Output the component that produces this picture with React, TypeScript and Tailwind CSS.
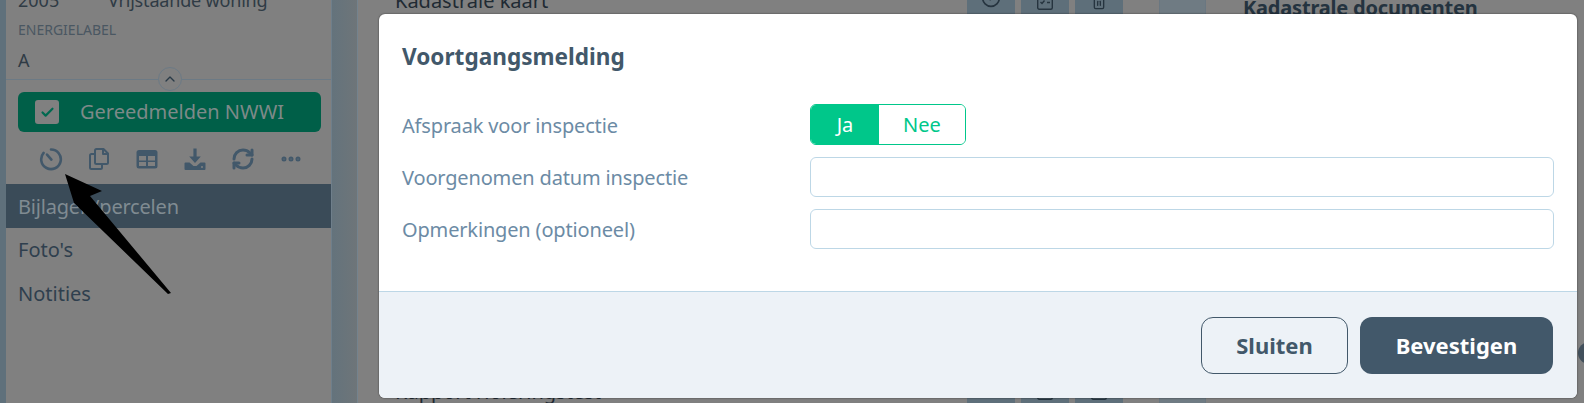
import { Check, ChevronUp, CircleCheck, Ellipsis, RefreshCw, Trash2 } from "lucide-react";

const font = { fontFamily: '"Noto Sans", sans-serif' };

function ActionButton({ children }: { children?: React.ReactNode }) {
  return <div className="flex h-12 w-12 items-center justify-center rounded bg-[#5e6f7a] text-[#26343f]">{children}</div>;
}

function TaskIcon() {
  return (
    <svg width="16" height="16" viewBox="0 0 16 16" fill="none" stroke="currentColor" strokeWidth="1.4">
      <rect x="0.7" y="0.7" width="14.600" height="14.600" rx="1.500" />
      <path d="M3.500 8l1.500 1.500L7.500 6.500M10 8.500h3" />
    </svg>
  );
}

function BoxIcon() {
  return (
    <svg width="16" height="16" viewBox="0 0 16 16" fill="none" stroke="currentColor" strokeWidth="1.4">
      <rect x="0.7" y="0.7" width="14.600" height="14.600" rx="1.500" />
    </svg>
  );
}

function DocRow({ title, className, top }: { title: string; className: string; top?: boolean }) {
  return (
    <div className={`flex h-12 items-center ${className}`}>
      <span className={`w-[609px] pl-[37px] text-[20px] text-[#1f2a33] ${top ? "-mt-[3px]" : ""}`}>{title}</span>
      <div className="flex gap-[6px]">
        <ActionButton>{top && <CircleCheck size={20} className="mb-[8px]" />}</ActionButton>
        <ActionButton>{top ? <TaskIcon /> : <BoxIcon />}</ActionButton>
        <ActionButton>{top ? <Trash2 size={16} /> : <BoxIcon />}</ActionButton>
      </div>
    </div>
  );
}

function ToolIcons() {
  return (
    <div className="mt-[15px] flex h-[24px] items-center gap-[24px] pl-[33px] text-[#42586a]">
      <svg width="24" height="24" viewBox="0 0 24 24" fill="none" stroke="currentColor" strokeWidth="2.6" strokeLinecap="round">
        <path d="M12 2.500a9.800 9.800 0 1 1-7.400 3.400" />
        <path d="M12.400 12.600 8 7.600" />
      </svg>
      <svg width="24" height="24" viewBox="0 0 24 24" fill="none" stroke="currentColor" strokeWidth="2" strokeLinejoin="round">
        <path d="M9.500 2h7l4.500 4.500V15.500a1.500 1.500 0 0 1-1.500 1.500h-10A1.500 1.500 0 0 1 8 15.500v-12A1.500 1.500 0 0 1 9.500 2z" />
        <path d="M16 2v5h5" />
        <path d="M8 7H4.500A1.500 1.500 0 0 0 3 8.500v12A1.500 1.500 0 0 0 4.500 22h9a1.500 1.500 0 0 0 1.500-1.500V17" />
      </svg>
      <svg width="24" height="24" viewBox="0 0 24 24">
        <rect x="1.500" y="3" width="21" height="18.500" rx="2.500" fill="currentColor" />
        <rect x="4" y="9" width="7" height="4.500" fill="#808080" />
        <rect x="13" y="9" width="7" height="4.500" fill="#808080" />
        <rect x="4" y="15" width="7" height="4" fill="#808080" />
        <rect x="13" y="15" width="7" height="4" fill="#808080" />
      </svg>
      <svg width="24" height="24" viewBox="0 0 24 24" fill="currentColor">
        <path d="M10.400 1.500h3.200v8h4.200L12 16 6.200 9.500h4.200z" />
        <path d="M1.500 16.500a1 1 0 0 1 1-1h4l4 3.500h3l4-3.500h4a1 1 0 0 1 1 1V22a1 1 0 0 1-1 1h-19a1 1 0 0 1-1-1z" />
        <circle cx="19" cy="20" r="1" fill="#808080" />
      </svg>
      <RefreshCw size={24} strokeWidth={3} />
      <Ellipsis size={24} strokeWidth={3} />
    </div>
  );
}

function Sidebar() {
  return (
    <aside className="w-[326px] shrink-0 border-r border-[#6f7f8b] bg-[#808080] text-[#2f3b45]">
      <div className="-mt-[10px] flex h-[20px] items-center px-[12px] text-[18px] leading-none">
        <span className="w-[90px]">2005</span>
        <span className="tracking-[-0.01em]">Vrijstaande woning</span>
      </div>
      <div className="mt-[10px] h-[20px] px-[12px] text-[14px] leading-[20px] text-[#4a5762]">ENERGIELABEL</div>
      <div className="mt-[10px] h-[20px] px-[12px] text-[18px] leading-[20px]">A</div>
      <div className="relative mt-[9px] border-b border-[#6c7a85]">
        <div className="absolute left-[152px] top-[-12px] flex h-[24px] w-[24px] items-center justify-center rounded-full border border-[#6c7a85] bg-[#808080] text-[#2a3a47]">
          <ChevronUp size={16} />
        </div>
      </div>
      <div className="mx-[12px] mt-[12px] flex h-[40px] w-[303px] items-center rounded-[6px] bg-[#005f48] pl-[17px]">
        <div className="flex h-[24px] w-[24px] items-center justify-center rounded-[3px] bg-[#808080] text-[#006950]">
          <Check size={15} strokeWidth={3.5} />
        </div>
        <span className="ml-[21px] text-[20px] text-[#7d8a88]">Gereedmelden NWWI</span>
      </div>
      <ToolIcons />
      <div className="mt-[13px] flex h-[44px] items-center bg-[#3a4b58] px-[12px] pt-[1px] text-[20px] tracking-[-0.01em] text-[#808b92]">Bijlagen/percelen</div>
      <div className="flex h-[43px] items-center px-[12px] pt-[1px] text-[20px] text-[#2f3f4e]">Foto's</div>
      <div className="flex h-[43px] items-center px-[12px] pt-[3px] text-[20px] text-[#2f3f4e]">Notities</div>
    </aside>
  );
}

function Modal() {
  const label = "w-[408px] pt-[2px] text-[20px] tracking-[-0.008em] text-[#6c8ba5]";
  return (
    <div className="absolute left-[379px] top-[14px] flex h-[384px] w-[1198px] flex-col overflow-hidden rounded-[6px] bg-white shadow-[0_0_2px_rgba(0,0,0,0.6)]">
      <div className="flex-1 px-[23px]">
        <h2 className="mt-[26px] h-[34px] text-[22.6px] font-bold leading-[34px] text-[#42586a]">Voortgangsmelding</h2>
        <div className="mt-[30px] flex h-[41px] items-center">
          <span className={label}>Afspraak voor inspectie</span>
          <div className="flex h-[41px] w-[156px] overflow-hidden rounded-[6px] border border-[#00c78a] text-[20px]">
            <div className="flex w-[68px] items-center justify-center bg-[#00c78a] text-white">Ja</div>
            <div className="flex flex-1 items-center justify-center bg-white text-[#00c78a]">Nee</div>
          </div>
        </div>
        <div className="mt-[12px] flex h-[40px] items-center">
          <span className={label}>Voorgenomen datum inspectie</span>
          <div className="h-[40px] w-[744px] rounded-[6px] border border-[#bdd7e6]" />
        </div>
        <div className="mt-[12px] flex h-[40px] items-center">
          <span className={label}>Opmerkingen (optioneel)</span>
          <div className="h-[40px] w-[744px] rounded-[6px] border border-[#bdd7e6]" />
        </div>
      </div>
      <div className="flex h-[107px] items-start justify-end gap-[12px] border-t border-[#bdd7e6] bg-[#edf2f7] pr-[24px] pt-[25px]">
        <button className="h-[57px] w-[147px] rounded-[12px] border border-[#42586a] text-[22px] font-bold text-[#42586a]">Sluiten</button>
        <button className="h-[57px] w-[193px] rounded-[12px] bg-[#42586a] text-[22px] font-bold text-white">Bevestigen</button>
      </div>
    </div>
  );
}

export default function App() {
  return (
    <div className="relative flex h-[403px] w-[1584px] overflow-hidden bg-[#808080]" style={font}>
      <div className="w-[6px] shrink-0 bg-[#5f707b]" />
      <Sidebar />
      <div className="w-[25px] shrink-0 bg-gradient-to-r from-[#64737c] to-[#6e7579]" />
      <main className="relative flex-1 border-l border-[#74838e]">
        <DocRow title="Kadastrale kaart" className="-mt-[22px]" top />
        <DocRow title="Rapport rioleringstest" className="mt-[342px]" />
        <div className="absolute left-[801px] top-0 h-[403px] w-[47px] border-x border-[#6a7781] bg-[#6f7b83]" />
        <h3 className="absolute left-[885px] top-[-7px] text-[20px] font-bold tracking-[-0.01em] text-[#24333f]">Kadastrale documenten</h3>
      </main>
      <div className="absolute -right-[16px] top-[342px] h-[22px] w-[22px] rounded-full bg-[#42505c]" />
      <Modal />
      <svg className="absolute left-0 top-0" width="200" height="300" viewBox="0 0 200 300">
        <polygon points="65,174 102,191 90,196 171,293 168,294 74,203" fill="#000" />
      </svg>
    </div>
  );
}
